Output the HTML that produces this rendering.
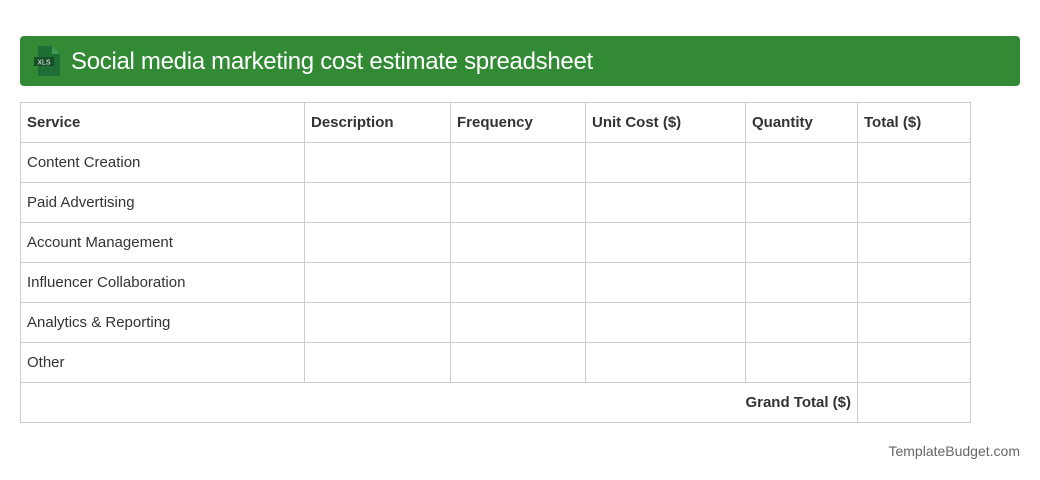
<!DOCTYPE html>
<html><head><style>
body{margin:0;width:1040px;height:480px;background:#fff;font-family:"Liberation Sans",sans-serif;position:relative;overflow:hidden}
.hdr{position:absolute;left:20px;top:36px;width:1000px;height:50px;background:#338a35;border-radius:4px}
.hdr .t{position:absolute;left:51px;top:12px;color:#fff;font-size:24px;letter-spacing:-0.3px}
table{position:absolute;left:20px;top:102px;border-collapse:collapse;font-size:15px;color:#333;table-layout:fixed;width:950px}
td{border:1px solid #ccc;height:40px;padding:0 6px;box-sizing:border-box}
tr.h td{font-weight:bold}
.f{position:absolute;right:20px;top:443px;font-size:14px;color:#666}
</style></head><body>
<div class="hdr">
<svg style="position:absolute;left:14px;top:10px" width="26" height="30" viewBox="0 0 26 30">
<path d="M4 0H18L26 8V30H4Z" fill="#1e6e35"/><path d="M18 0V8H26Z" fill="#3b9b55"/>
<rect x="0" y="11" width="20" height="9" fill="#174f27"/>
<text x="10" y="18.5" fill="#fff" font-size="7" text-anchor="middle" font-family="Liberation Sans">XLS</text>
</svg>
<div class="t">Social media marketing cost estimate spreadsheet</div>
</div>
<table>
<colgroup><col style="width:284px"><col style="width:146px"><col style="width:135px"><col style="width:160px"><col style="width:112px"><col style="width:113px"></colgroup>
<tr class="h"><td>Service</td><td>Description</td><td>Frequency</td><td>Unit Cost ($)</td><td>Quantity</td><td>Total ($)</td></tr>
<tr><td>Content Creation</td><td></td><td></td><td></td><td></td><td></td></tr>
<tr><td>Paid Advertising</td><td></td><td></td><td></td><td></td><td></td></tr>
<tr><td>Account Management</td><td></td><td></td><td></td><td></td><td></td></tr>
<tr><td>Influencer Collaboration</td><td></td><td></td><td></td><td></td><td></td></tr>
<tr><td>Analytics &amp; Reporting</td><td></td><td></td><td></td><td></td><td></td></tr>
<tr><td>Other</td><td></td><td></td><td></td><td></td><td></td></tr>
<tr><td colspan="5" style="text-align:right;font-weight:bold">Grand Total ($)</td><td></td></tr>
</table>
<div class="f">TemplateBudget.com</div>
</body></html>
